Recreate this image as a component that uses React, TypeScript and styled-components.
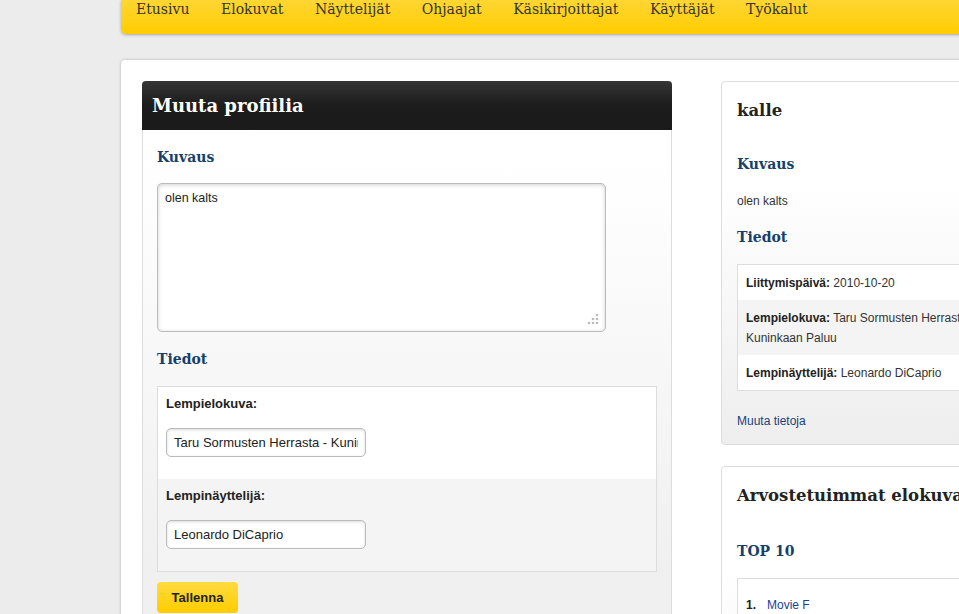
import React from 'react';
import styled, { createGlobalStyle } from 'styled-components';

const GlobalStyle = createGlobalStyle`
  html, body {
    margin: 0;
    padding: 0;
    background: #ececec;
    overflow: hidden;
  }
  body {
    font-family: "Liberation Sans", Arial, sans-serif;
    font-size: 12px;
    color: #333;
  }
  * {
    box-sizing: border-box;
  }
`

const serif = `"DejaVu Serif", "Liberation Serif", serif`;

const Page = styled.div`
  margin-left: 121px;
  width: 1100px;
`

const Nav = styled.nav`
  height: 34px;
  display: flex;
  align-items: flex-start;
  padding-left: 15px;
  gap: 31.5px;
  background: linear-gradient(#ffd633, #ffcc00);
  border-radius: 0 0 0 5px;
  box-shadow: 0 1px 3px rgba(0, 0, 0, 0.3);
`

const NavItem = styled.a`
  font-family: ${serif};
  font-size: 14px;
  line-height: 18px;
  color: #333;
  text-decoration: none;
`

const Main = styled.main`
  margin-top: 26px;
  background: #fff;
  border-radius: 4px 0 0 0;
  box-shadow: 0 0 3px rgba(0, 0, 0, 0.25);
  padding: 21px;
  display: flex;
  align-items: flex-start;
  gap: 49px;
  min-height: 600px;
`

const LeftPanel = styled.section`
  width: 530px;
  border: 1px solid #ddd;
  border-top: none;
  border-radius: 4px 4px 0 0;
  background: linear-gradient(#fff 0px, #fff 80px, #f0f0f0 480px);
`

const PanelHeader = styled.header`
  height: 49px;
  display: flex;
  align-items: center;
  padding-left: 10px;
  margin: 0 -1px;
  border-radius: 4px 4px 0 0;
  background: linear-gradient(#353535, #1c1c1c 50%, #1a1a1a);
  color: #fff;
  font-family: ${serif};
  font-weight: bold;
  font-size: 18px;
`

const PanelBody = styled.div`
  padding: 0 14px 20px;
`

const SectionTitle = styled.h3<{ $top: number; $bottom: number }>`
  margin: ${p => p.$top}px 0 ${p => p.$bottom}px;
  font-family: ${serif};
  font-weight: bold;
  font-size: 14px;
  line-height: 20px;
  color: #163f6b;
`

const AreaWrap = styled.div`
  position: relative;
  width: 449px;
  height: 149px;
`

const TextArea = styled.textarea`
  width: 100%;
  height: 100%;
  resize: none;
  margin: 0;
  padding: 7px;
  border: 1px solid #bbb;
  border-radius: 5px;
  box-shadow: inset 0 1px 4px rgba(0, 0, 0, 0.18);
  font-family: "Liberation Sans", Arial, sans-serif;
  font-size: 12.5px;
  color: #222;
  outline: none;
`

const Grip = styled.svg`
  position: absolute;
  right: 7px;
  bottom: 7px;
`

const FieldBox = styled.div`
  border: 1px solid #ddd;
  width: 500px;
`

const FieldRow = styled.div<{ $alt?: boolean }>`
  padding: 9px 8px 22px;
  background: ${p => (p.$alt ? '#f4f4f4' : '#fff')};
`

const Label = styled.label`
  display: block;
  font-weight: bold;
  font-size: 13px;
  line-height: 16px;
  color: #222;
  margin-bottom: 16px;
`

const Input = styled.input`
  width: 200px;
  height: 29px;
  margin: 0;
  padding: 0 7px;
  border: 1px solid #bbb;
  border-radius: 5px;
  box-shadow: inset 0 1px 3px rgba(0, 0, 0, 0.15);
  font-family: "Liberation Sans", Arial, sans-serif;
  font-size: 13px;
  color: #222;
  outline: none;
`

const SaveButton = styled.button`
  margin-top: 10px;
  height: 31px;
  width: 81px;
  padding: 0;
  border: none;
  border-radius: 4px;
  background: linear-gradient(#ffdb40, #ffcc00);
  font-family: "Liberation Sans", Arial, sans-serif;
  font-weight: bold;
  font-size: 13px;
  color: #222;
`

const RightColumn = styled.div`
  width: 290px;
  display: flex;
  flex-direction: column;
  gap: 21px;
`

const SidePanel = styled.section`
  border: 1px solid #ddd;
  border-radius: 4px 0 0 4px;
  padding: 17px 15px 15px;
  background: linear-gradient(#fff 0px, #fff 100px, #eee 360px);
`

const SideTitle = styled.h2`
  margin: 0;
  font-family: ${serif};
  font-weight: bold;
  font-size: 16.5px;
  line-height: 24px;
  color: #222;
  white-space: nowrap;
`

const Text = styled.p<{ $top: number }>`
  margin: ${p => p.$top}px 0 0;
  line-height: 16px;
  font-size: 12px;
  color: #333;
`

const InfoTable = styled.div`
  border: 1px solid #ddd;
  width: 270px;
`

const InfoRow = styled.div<{ $alt?: boolean }>`
  padding: 8px 8px 7px;
  line-height: 20px;
  font-size: 12px;
  color: #333;
  background: ${p => (p.$alt ? '#f4f4f4' : '#fff')};

  b {
    color: #222;
  }
`

const Link = styled.a`
  display: block;
  margin-top: 22px;
  line-height: 16px;
  font-size: 12px;
  color: #1a3e78;
  text-decoration: none;
`

const TopList = styled.ol`
  list-style: none;
  margin: 0;
  padding: 16px 8px;
  border: 1px solid #ddd;
  width: 270px;
  background: #fff;
`

const TopItem = styled.li`
  line-height: 20px;
  font-size: 12px;

  b {
    display: inline-block;
    width: 21px;
    color: #222;
  }

  a {
    color: #1c3f94;
    text-decoration: none;
  }
`

const navItems = ['Etusivu', 'Elokuvat', 'Näyttelijät', 'Ohjaajat', 'Käsikirjoittajat', 'Käyttäjät', 'Työkalut'];

export default function App() {
  return (
    <>
      <GlobalStyle />
      <Page>
        <Nav>
          {navItems.map(item => (
            <NavItem key={item} href="#">{item}</NavItem>
          ))}
        </Nav>
        <Main>
          <LeftPanel>
            <PanelHeader>Muuta profiilia</PanelHeader>
            <PanelBody>
              <SectionTitle $top={17} $bottom={16}>Kuvaus</SectionTitle>
              <AreaWrap>
                <TextArea defaultValue="olen kalts" />
                <Grip width="12" height="12" viewBox="0 0 12 12">
                  {[[10, 2], [6, 6], [10, 6], [2, 10], [6, 10], [10, 10]].map(([cx, cy]) => (
                    <circle key={`${cx}-${cy}`} cx={cx} cy={cy} r="1.3" fill="#bbb" />
                  ))}
                </Grip>
              </AreaWrap>
              <SectionTitle $top={17} $bottom={17}>Tiedot</SectionTitle>
              <FieldBox>
                <FieldRow>
                  <Label>Lempielokuva:</Label>
                  <Input defaultValue="Taru Sormusten Herrasta - Kuninkaan Paluu" />
                </FieldRow>
                <FieldRow $alt>
                  <Label>Lempinäyttelijä:</Label>
                  <Input defaultValue="Leonardo DiCaprio" />
                </FieldRow>
              </FieldBox>
              <SaveButton>Tallenna</SaveButton>
            </PanelBody>
          </LeftPanel>
          <RightColumn>
            <SidePanel>
              <SideTitle>kalle</SideTitle>
              <SectionTitle $top={31} $bottom={0}>Kuvaus</SectionTitle>
              <Text $top={19}>olen kalts</Text>
              <SectionTitle $top={18} $bottom={17}>Tiedot</SectionTitle>
              <InfoTable>
                <InfoRow><b>Liittymispäivä:</b> 2010-10-20</InfoRow>
                <InfoRow $alt><b>Lempielokuva:</b> Taru Sormusten Herrasta - Kuninkaan Paluu</InfoRow>
                <InfoRow><b>Lempinäyttelijä:</b> Leonardo DiCaprio</InfoRow>
              </InfoTable>
              <Link href="#">Muuta tietoja</Link>
            </SidePanel>
            <SidePanel>
              <SideTitle>Arvostetuimmat elokuvat</SideTitle>
              <SectionTitle $top={33} $bottom={17}>TOP 10</SectionTitle>
              <TopList>
                <TopItem><b>1.</b><a href="#">Movie F</a></TopItem>
                <TopItem><b>2.</b><a href="#">Movie A</a></TopItem>
              </TopList>
            </SidePanel>
          </RightColumn>
        </Main>
      </Page>
    </>
  );
}
